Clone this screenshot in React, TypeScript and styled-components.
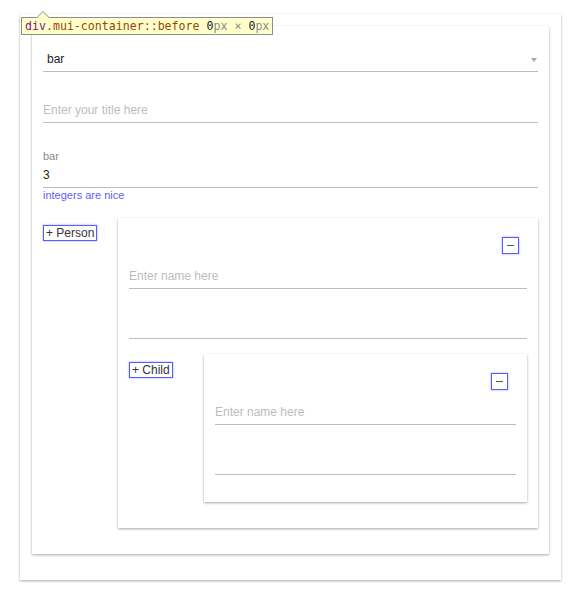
import React from 'react';
import styled, { createGlobalStyle } from 'styled-components';

const GlobalStyle = createGlobalStyle`
    body {
        margin: 0;
        background: #ffffff;
        font-family: 'Liberation Sans', Arial, sans-serif;
    }
`;

const Page = styled.div`
    position: relative;
    margin: 14px 18px 0 20px;
    padding-bottom: 20px;
`;

const Paper = styled.div<{ pad?: string }>`
    background: #ffffff;
    box-shadow: 0 1px 3px rgba(0, 0, 0, 0.14), 0 1px 2px rgba(0, 0, 0, 0.22);
    padding: ${(props) => props.pad || '0'};
    display: flex;
    flex-direction: column;
`;

const Field = styled.div<{ h?: number; mt?: number }>`
    position: relative;
    box-sizing: border-box;
    height: ${(props) => props.h || 33}px;
    margin-top: ${(props) => props.mt || 0}px;
    border-bottom: 1px solid #bdbdbd;
    display: flex;
    align-items: flex-end;
    padding: 0 0 4px 0;
    font-size: 12px;
    line-height: 15px;
`;

const Value = styled.span<{ indent?: number }>`
    color: #222222;
    padding-left: ${(props) => props.indent || 0}px;
`;

const Placeholder = styled.span`
    color: #bdbdbd;
`;

const Arrow = styled.span`
    position: absolute;
    right: 1px;
    top: 19px;
    width: 0;
    height: 0;
    border-left: 3px solid transparent;
    border-right: 3px solid transparent;
    border-top: 4px solid #a8a8a8;
`;

const Label = styled.div`
    margin-top: 27px;
    font-size: 11px;
    line-height: 13px;
    color: #8a8a8a;
`;

const Helper = styled.div`
    margin-top: 1px;
    font-size: 11px;
    line-height: 13px;
    color: #5e5ef6;
`;

const Row = styled.div<{ mt: number }>`
    display: grid;
    grid-template-columns: 75px 1fr;
    align-items: start;
    margin-top: ${(props) => props.mt}px;
`;

const AddButton = styled.button<{ top: number }>`
    justify-self: start;
    margin-top: ${(props) => props.top}px;
    height: 16px;
    padding: 0 2px;
    background: #ffffff;
    border: 1px solid #5a5aff;
    box-shadow: 0 0 2px rgba(90, 90, 255, 0.6);
    font-family: 'Liberation Sans', Arial, sans-serif;
    font-size: 12px;
    line-height: 14px;
    color: #333333;
`;

const RemoveRow = styled.div`
    display: flex;
    justify-content: flex-end;
    padding-right: 8px;
`;

const RemoveButton = styled.button`
    width: 17px;
    height: 17px;
    padding: 0;
    background: #ffffff;
    border: 1px solid #5a5aff;
    box-shadow: 0 0 2px rgba(90, 90, 255, 0.6);
    display: flex;
    align-items: center;
    justify-content: center;

    span {
        display: block;
        width: 7px;
        height: 1px;
        background: #555555;
    }
`;

const Tip = styled.div`
    position: absolute;
    left: 1px;
    top: 3px;
    height: 16px;
    padding: 0 3px;
    background: #ffffcc;
    border: 1px solid #8d8d8d;
    font-family: 'DejaVu Sans Mono', monospace;
    font-size: 11.6px;
    line-height: 16px;
    white-space: nowrap;
    color: #222222;

    &::before {
        content: '';
        position: absolute;
        left: 14px;
        top: -7px;
        border-left: 7px solid transparent;
        border-right: 7px solid transparent;
        border-bottom: 7px solid #8d8d8d;
    }

    &::after {
        content: '';
        position: absolute;
        left: 15px;
        top: -6px;
        border-left: 6px solid transparent;
        border-right: 6px solid transparent;
        border-bottom: 6px solid #ffffcc;
    }

    .tag { color: #881280; }
    .cls { color: #994500; }
    .unit { color: #888888; }
`;

const NameFields: React.FC = () => (
    <>
        <Field mt={2}>
            <Placeholder>Enter name here</Placeholder>
        </Field>
        <Field mt={17} />
    </>
);

const App: React.FC = () => (
    <Page>
        <GlobalStyle />
        <Paper pad="12px 12px 26px 12px">
            <Paper pad="13px 11px 26px 11px">
                <Field>
                    <Value indent={4}>bar</Value>
                    <Arrow />
                </Field>
                <Field mt={18}>
                    <Placeholder>Enter your title here</Placeholder>
                </Field>
                <Label>bar</Label>
                <Field h={25}>
                    <Value>3</Value>
                </Field>
                <Helper>integers are nice</Helper>
                <Row mt={16}>
                    <AddButton top={7}>+ Person</AddButton>
                    <Paper pad="19px 11px 26px 11px">
                        <RemoveRow>
                            <RemoveButton><span /></RemoveButton>
                        </RemoveRow>
                        <NameFields />
                        <Row mt={15}>
                            <AddButton top={8}>+ Child</AddButton>
                            <Paper pad="19px 11px 27px 11px">
                                <RemoveRow>
                                    <RemoveButton><span /></RemoveButton>
                                </RemoveRow>
                                <NameFields />
                            </Paper>
                        </Row>
                    </Paper>
                </Row>
            </Paper>
        </Paper>
        <Tip>
            <span className="tag">div</span>
            <span className="cls">.mui-container::before</span> 0<span className="unit">px × </span>0<span className="unit">px</span>
        </Tip>
    </Page>
);

export default App;
